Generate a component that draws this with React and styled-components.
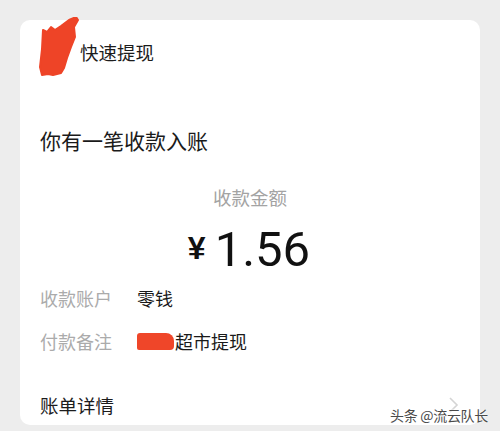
import React from "react";
import styled, { createGlobalStyle } from "styled-components";

const GlobalStyle = createGlobalStyle`
  html, body {
    margin: 0;
    padding: 0;
    background: #ededed;
    font-family: "Noto Sans CJK SC", "Noto Sans", sans-serif;
  }
`;

const Page = styled.div`
  position: relative;
  width: 500px;
  height: 431px;
  overflow: hidden;
  padding-top: 20px;
  box-sizing: border-box;
`;

const Card = styled.div`
  margin: 0 20px;
  height: 405px;
  background: #fff;
  border-radius: 10px;
  padding: 0 20px;
  box-sizing: border-box;
  display: flex;
  flex-direction: column;
`;

const Header = styled.div`
  display: flex;
  align-items: flex-start;
  margin-top: -3px;
  margin-left: -2px;
`;

const Title = styled.div`
  margin-top: 22px;
  font-size: 18.5px;
  line-height: 26px;
  color: #1c1c1c;
`;

const Notice = styled.div`
  margin-top: 48px;
  font-size: 21px;
  line-height: 30px;
  color: #1a1a1a;
`;

const AmountLabel = styled.div`
  margin-top: 29px;
  text-align: center;
  font-size: 18.5px;
  line-height: 26px;
  color: #a3a3a3;
`;

const Amount = styled.div`
  margin-top: 12px;
  display: flex;
  justify-content: center;
  align-items: center;
  height: 56px;
  color: #111;
`;

const Yen = styled.span`
  font-family: "Liberation Sans", Arial, sans-serif;
  font-weight: 700;
  font-size: 32px;
  line-height: 40px;
  margin-right: 9px;
  margin-top: -4px;
`;

const Digits = styled.span`
  font-family: Roboto, "Noto Sans", sans-serif;
  font-size: 49px;
  line-height: 56px;
  margin-right: 2px;
`;

const Rows = styled.div`
  margin-top: 7px;
  display: flex;
  flex-direction: column;
  gap: 17px;
`;

const Row = styled.div`
  display: flex;
  align-items: center;
  font-size: 18px;
  line-height: 26px;
`;

const Label = styled.span`
  width: 97px;
  color: #ababab;
`;

const Value = styled.span`
  display: flex;
  align-items: center;
  color: #1a1a1a;
`;

const Blot = styled.span`
  display: inline-block;
  width: 37px;
  height: 17px;
  margin-right: 1px;
  background: #ef4629;
  border-radius: 3px 8px 4px 2px;
  filter: blur(0.6px);
`;

const Detail = styled.div`
  margin-top: 38px;
  display: flex;
  justify-content: space-between;
  align-items: center;
  font-size: 18.5px;
  line-height: 26px;
  color: #1c1c1c;
`;

const Watermark = styled.div`
  position: absolute;
  right: 12px;
  bottom: 7px;
  font-size: 14px;
  line-height: 18px;
  color: #4a4a4a;
  text-shadow: 0 0 2px #fff, 0 0 2px #fff;
  letter-spacing: -0.3px;
`;

const Scribble = () => (
  <svg width="42" height="60" viewBox="0 0 42 60">
    <path
      d="M4,58 L2,50 L4,32 L5,13 L9,15 L13,10 L17,13 L23,9 L31,3 L38,0 L40,3 L36,10 L37,20 L33,30 L29,41 L26,51 L23,56 L15,58 L10,57 Z"
      fill="#ee4427"
      stroke="#ee4427"
      strokeWidth="2"
      strokeLinejoin="round"
    />
  </svg>
);

const Chevron = () => (
  <svg width="12" height="18" viewBox="0 0 12 18">
    <path d="M2,2 L9,9 L2,16" fill="none" stroke="#d4d4d4" strokeWidth="1.6" />
  </svg>
);

export default function App() {
  return (
    <Page>
      <GlobalStyle />
      <Card>
        <Header>
          <Scribble />
          <Title>快速提现</Title>
        </Header>
        <Notice>你有一笔收款入账</Notice>
        <AmountLabel>收款金额</AmountLabel>
        <Amount>
          <Yen>¥</Yen>
          <Digits>1.56</Digits>
        </Amount>
        <Rows>
          <Row>
            <Label>收款账户</Label>
            <Value>零钱</Value>
          </Row>
          <Row>
            <Label>付款备注</Label>
            <Value>
              <Blot />
              超市提现
            </Value>
          </Row>
        </Rows>
        <Detail>
          <span>账单详情</span>
          <Chevron />
        </Detail>
      </Card>
      <Watermark>头条 @流云队长</Watermark>
    </Page>
  );
}
